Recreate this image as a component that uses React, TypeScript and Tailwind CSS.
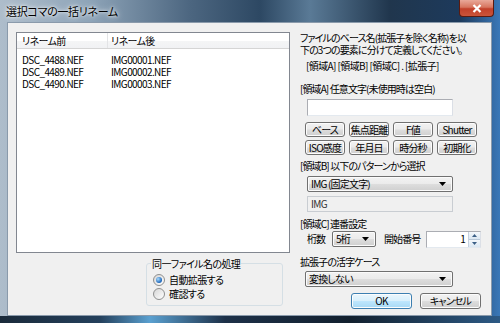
import React from 'react';

const JP = "font-['Noto_Sans_CJK_JP','Noto_Sans',sans-serif] [font-feature-settings:'palt']";

const rows = [
    { before: 'DSC_4488.NEF', after: 'IMG00001.NEF' },
    { before: 'DSC_4489.NEF', after: 'IMG00002.NEF' },
    { before: 'DSC_4490.NEF', after: 'IMG00003.NEF' },
];

const Btn: React.FC<{ children: React.ReactNode; className?: string }> = ({ children, className = '' }) => (
    <div className={`flex items-center justify-center whitespace-nowrap rounded-[3px] border border-[#707070] bg-[linear-gradient(#f2f2f2_0%,#ebebeb_48%,#dddddd_52%,#cfcfcf_100%)] text-[10px] tracking-[-0.8px] leading-none text-black shadow-[inset_0_0_0_1px_#fcfcfc] ${className}`}>
        {children}
    </div>
);

const Combo: React.FC<{ label: string; className?: string }> = ({ label, className = '' }) => (
    <div className={`flex items-center rounded-[2px] border border-[#707070] bg-[linear-gradient(#f2f2f2_0%,#ebebeb_48%,#dddddd_52%,#cfcfcf_100%)] pl-[3px] pr-[6px] shadow-[inset_0_0_0_1px_#fbfbfb] ${className}`}>
        <span className="flex-1 whitespace-nowrap text-[10px] tracking-[-0.8px] leading-none">{label}</span>
        <svg width="7" height="4" viewBox="0 0 7 4"><path d="M0 0h7L3.5 4z" fill="#000" /></svg>
    </div>
);

const Radio: React.FC<{ checked?: boolean; label: string }> = ({ checked, label }) => (
    <div className="flex items-center gap-[4px] h-[14px]">
        <div className="w-[12px] h-[12px] rounded-full border border-[#8e8f8f] bg-[linear-gradient(135deg,#d6d6d6,#ffffff)] flex items-center justify-center">
            {checked && <div className="w-[6px] h-[6px] rounded-full bg-[radial-gradient(circle_at_35%_35%,#a8dcff,#1a63b8_70%)]" />}
        </div>
        <span className="text-[10px] tracking-[-0.6px] leading-none whitespace-nowrap">{label}</span>
    </div>
);

export default function App() {
    return (
        <div className={`w-[500px] h-[323px] flex flex-col bg-[linear-gradient(90deg,#aebdcb_0%,#8ea4b8_18%,#4c6680_38%,#2d4863_52%,#5a7a96_62%,#20364d_78%,#1d3a5c_92%,#3a78b8_100%)] ${JP} text-black overflow-hidden`}>
            {/* Title bar */}
            <div className="h-[22px] relative flex items-center pl-[6px] shrink-0">
                <span className="text-[11px] tracking-[-0.3px] leading-none text-black whitespace-nowrap [text-shadow:0_0_6px_#ffffff,0_0_3px_#ffffff]">選択コマの一括リネーム</span>
                <div className="absolute right-[6px] top-0 w-[35px] h-[17px] rounded-b-[4px] border border-t-0 border-[#5a1a10] bg-[linear-gradient(#e9a899_0%,#d7755f_45%,#c2402a_55%,#c9553a_100%)] flex items-center justify-center">
                    <svg width="10" height="9" viewBox="0 0 10 9"><path d="M1.5 1l7 7M8.5 1l-7 7" stroke="#fff" strokeWidth="2.2" /></svg>
                </div>
            </div>

            {/* Client area */}
            <div className="h-[294px] flex pl-[7px] pr-[8px] shrink-0">
                <div className="flex-1 flex bg-[#f0f0f0] border border-[#8a9aab]">
                    {/* Left column */}
                    <div className="w-[292px] shrink-0 pl-[8px] pt-[9px] flex flex-col">
                        <div className="w-[274px] h-[221px] border border-[#828790] bg-white flex flex-col">
                            <div className="h-[16px] flex bg-[linear-gradient(#ffffff_0%,#ffffff_50%,#f4f5f6_55%,#f1f2f4_100%)] border-b border-[#d5d5d5] text-[10px] tracking-[-0.6px] leading-none items-center">
                                <div className="w-[91px] pl-[5px] h-full flex items-center border-r border-[#e3e4e6]">リネーム前</div>
                                <div className="pl-[3px]">リネーム後</div>
                            </div>
                            <div className="pt-[5px] flex flex-col">
                                {rows.map(r => (
                                    <div key={r.before} className="h-[12px] flex items-center text-[10px] tracking-[-0.6px] leading-[12px]">
                                        <div className="w-[91px] pl-[5px]">{r.before}</div>
                                        <div className="pl-[3px]">{r.after}</div>
                                    </div>
                                ))}
                            </div>
                        </div>

                        {/* Group box */}
                        <div className="ml-[130px] mt-[10px] w-[137px] h-[43px] relative border border-[#d5dfe5] rounded-[3px] pt-[9px] pl-[6px] flex flex-col">
                            <span className="absolute -top-[7px] left-[4px] px-[1px] bg-[#f0f0f0] text-[10px] tracking-[-0.6px] leading-[13px] whitespace-nowrap">同一ファイル名の処理</span>
                            <Radio checked label="自動拡張する" />
                            <Radio label="確認する" />
                        </div>
                    </div>

                    {/* Right column */}
                    <div className="flex-1 pt-[9px] pr-[10px] flex flex-col text-[10px] tracking-[-0.9px] whitespace-nowrap">
                        <p className="leading-[12px]">ファイルのベース名(拡張子を除く名称)を以<br />下の3つの要素に分けて定義してください。</p>
                        <p className="mt-[4px] pl-[6px] leading-[12px] tracking-[-0.6px]">[領域A] [領域B] [領域C] . [拡張子]</p>
                        <p className="mt-[11px] leading-[12px]">[領域A] 任意文字(未使用時は空白)</p>
                        <div className="mt-[4px] ml-[7px] w-[146px] h-[17px] bg-white border border-[#abadb3] border-b-[#e3e9ef] border-r-[#dbdfe6]" />

                        <div className="mt-[6px] ml-[5px] flex flex-col gap-[3px]">
                            <div className="flex gap-[4px]">
                                <Btn className="w-[40px] h-[15px]">ベース</Btn>
                                <Btn className="w-[40px] h-[15px]">焦点距離</Btn>
                                <Btn className="w-[40px] h-[15px]">F値</Btn>
                                <Btn className="w-[40px] h-[15px]">Shutter</Btn>
                            </div>
                            <div className="flex gap-[4px]">
                                <Btn className="w-[40px] h-[15px]">ISO感度</Btn>
                                <Btn className="w-[40px] h-[15px]">年月日</Btn>
                                <Btn className="w-[40px] h-[15px]">時分秒</Btn>
                                <Btn className="w-[40px] h-[15px]">初期化</Btn>
                            </div>
                        </div>

                        <p className="mt-[5px] leading-[12px]">[領域B] 以下のパターンから選択</p>
                        <Combo label="IMG (固定文字)" className="mt-[4px] ml-[7px] w-[146px] h-[16px]" />
                        <div className="mt-[4px] ml-[7px] w-[146px] h-[16px] border border-[#c9cdd2] bg-[#f0f0f0] flex items-center pl-[3px] tracking-[-0.6px] leading-none text-[#333]">IMG</div>

                        <p className="mt-[6px] leading-[12px]">[領域C] 連番設定</p>
                        <div className="mt-[1px] ml-[7px] flex items-center h-[16px]">
                            <span className="w-[25px] leading-none">桁数</span>
                            <Combo label="5桁" className="w-[44px] h-[16px]" />
                            <span className="ml-[8px] w-[42px] leading-none">開始番号</span>
                            <div className="w-[55px] h-[17px] bg-white border border-[#abadb3] border-b-[#e3e9ef] border-r-[#dbdfe6] flex items-center">
                                <span className="flex-1 text-right pr-[3px] leading-none">1</span>
                                <div className="w-[12px] h-full flex flex-col border-l border-[#c5d1de]">
                                    <div className="flex-1 flex items-center justify-center bg-[linear-gradient(#f4f8fb,#dbe7f2)] border-b border-[#b8c8d8]">
                                        <svg width="5" height="3" viewBox="0 0 5 3"><path d="M0 3h5L2.5 0z" fill="#3b5f86" /></svg>
                                    </div>
                                    <div className="flex-1 flex items-center justify-center bg-[linear-gradient(#f4f8fb,#dbe7f2)]">
                                        <svg width="5" height="3" viewBox="0 0 5 3"><path d="M0 0h5L2.5 3z" fill="#3b5f86" /></svg>
                                    </div>
                                </div>
                            </div>
                        </div>

                        <p className="mt-[9px] leading-[12px]">拡張子の活字ケース</p>
                        <Combo label="変換しない" className="mt-[3px] ml-[5px] w-[148px] h-[16px]" />

                        <div className="mt-[6px] flex justify-end gap-[8px]">
                            <Btn className="w-[61px] h-[16px] !border-[#3c7fb1] !bg-[linear-gradient(#eaf6fd_0%,#d9f0fc_48%,#bee6fd_52%,#a7d9f5_100%)]">OK</Btn>
                            <Btn className="w-[61px] h-[16px]">キャンセル</Btn>
                        </div>
                    </div>
                </div>
            </div>
            <div className="flex-1 bg-[linear-gradient(90deg,#1a2a3a_0%,#24405c_20%,#5aa0d0_30%,#1d3048_45%,#12202e_70%,#2d5a85_100%)]" />
        </div>
    );
}
